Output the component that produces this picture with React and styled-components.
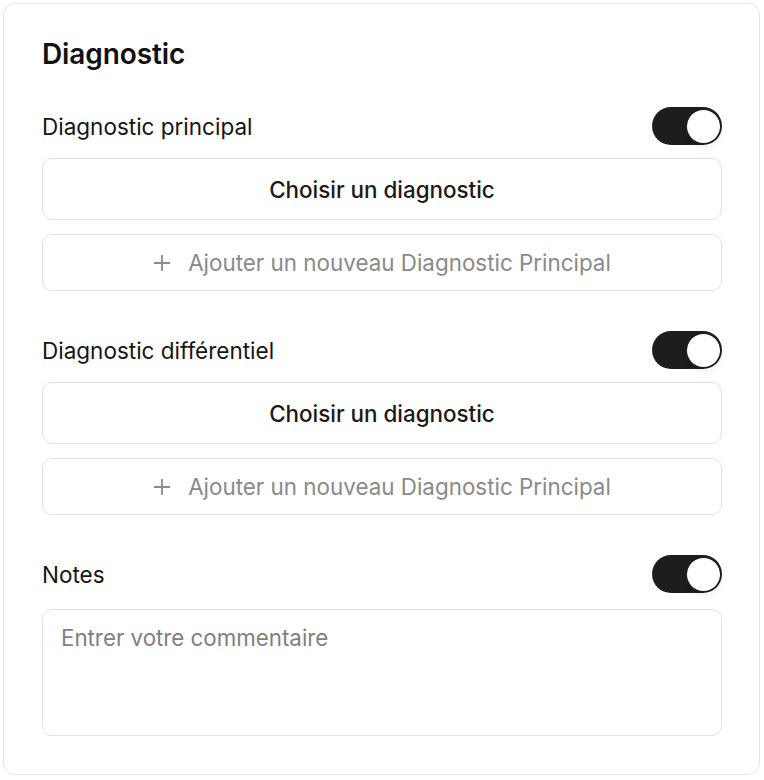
import React, { useState } from "react";
import styled, { createGlobalStyle } from "styled-components";

const Global = createGlobalStyle`
  html, body { margin: 0; padding: 0; background: #ffffff; }
  body { font-family: Inter, "Noto Sans", sans-serif; -webkit-font-smoothing: antialiased; }
  * { box-sizing: border-box; }
`;

const Page = styled.div`
  padding: 3px 5px 6px 3px;
`;

const Card = styled.section`
  width: 757px;
  border: 1px solid #e4e4e4;
  border-radius: 12px;
  background: #fff;
  padding: 34px 37px 38px 38px;
  display: flex;
  flex-direction: column;
`;

const Title = styled.h2`
  margin: 0 0 37px 0;
  font-size: 28px;
  line-height: 32px;
  font-weight: 600;
  color: #111;
  letter-spacing: -0.1px;
`;

const Section = styled.div`
  display: flex;
  flex-direction: column;
  margin-bottom: ${(p) => (p.$last ? "0" : "40px")};
`;

const Header = styled.div`
  display: flex;
  align-items: center;
  justify-content: space-between;
  height: 38px;
  margin-bottom: ${(p) => (p.$tight ? "16px" : "13px")};
`;

const Label = styled.span`
  font-size: 22.5px;
  font-weight: 400;
  color: #151515;
`;

const Track = styled.button`
  width: 70px;
  height: 38px;
  border-radius: 19px;
  border: none;
  padding: 0;
  background: ${(p) => (p.$on ? "#1d1d1f" : "#d4d4d8")};
  position: relative;
  cursor: pointer;
  flex-shrink: 0;
`;

const Knob = styled.span`
  position: absolute;
  top: 2.5px;
  left: ${(p) => (p.$on ? "34.5px" : "2.5px")};
  width: 33px;
  height: 33px;
  border-radius: 50%;
  background: #fff;
  box-shadow: 0 5px 9px rgba(0, 0, 0, 0.06);
`;

const SelectButton = styled.button`
  height: 62px;
  width: 100%;
  border: 1px solid #e2e2e2;
  border-radius: 10px;
  background: #fff;
  font-family: inherit;
  font-size: 22.4px;
  font-weight: 500;
  color: #1a1a1a;
  cursor: pointer;
  margin-bottom: 14px;
`;

const AddButton = styled.button`
  height: 57px;
  width: 100%;
  border: 1px solid #e2e2e2;
  border-radius: 10px;
  background: #fff;
  font-family: inherit;
  font-size: 22.4px;
  font-weight: 400;
  color: #8a8a8a;
  display: flex;
  align-items: center;
  justify-content: center;
  gap: 17px;
  cursor: pointer;
`;

const Plus = styled.svg`
  width: 18px;
  height: 18px;
  flex-shrink: 0;
`;

const TextArea = styled.textarea`
  height: 127px;
  width: 100%;
  border: 1px solid #e2e2e2;
  border-radius: 10px;
  padding: 14px 18px;
  font-family: inherit;
  font-size: 22.3px;
  color: #1a1a1a;
  resize: none;
  outline: none;
  &::placeholder { color: #7f7f7f; }
`;

function Toggle() {
  const [on, setOn] = useState(true);
  return (
    <Track $on={on} onClick={() => setOn(!on)} aria-pressed={on}>
      <Knob $on={on} />
    </Track>
  );
}

function DiagSection({ label }) {
  return (
    <Section>
      <Header>
        <Label>{label}</Label>
        <Toggle />
      </Header>
      <SelectButton>Choisir un diagnostic</SelectButton>
      <AddButton>
        <Plus viewBox="0 0 18 18">
          <path d="M9 1v16M1 9h16" stroke="#8a8a8a" strokeWidth="1.8" fill="none" />
        </Plus>
        Ajouter un nouveau Diagnostic Principal
      </AddButton>
    </Section>
  );
}

export default function App() {
  return (
    <Page>
      <Global />
      <Card>
        <Title>Diagnostic</Title>
        <DiagSection label="Diagnostic principal" />
        <DiagSection label="Diagnostic différentiel" />
        <Section $last>
          <Header $tight>
            <Label>Notes</Label>
            <Toggle />
          </Header>
          <TextArea placeholder="Entrer votre commentaire" />
        </Section>
      </Card>
    </Page>
  );
}
